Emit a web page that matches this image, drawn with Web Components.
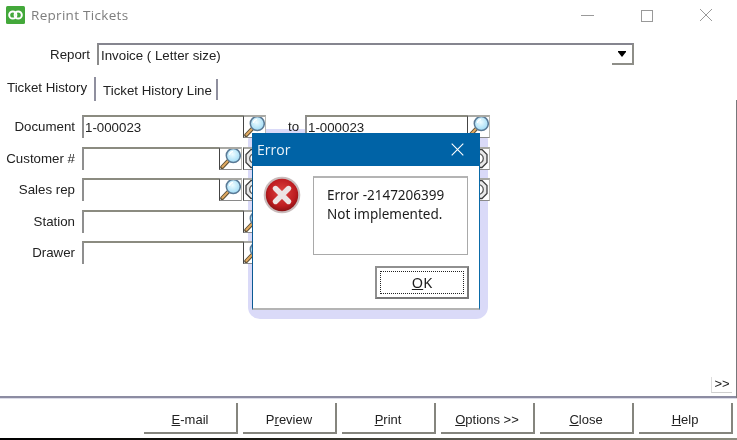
<!DOCTYPE html>
<html lang="en"><head><meta charset="utf-8"><title>Reprint Tickets</title>
<style>
html,body{margin:0;padding:0;background:#fff;overflow:hidden}
body{width:737px;height:440px;font:13.3px "Liberation Sans",Arial,sans-serif;color:#222}
</style></head><body>

<reprint-window>
  <title-bar slot="title">Reprint Tickets</title-bar>
  <form-row slot="report" label="Report" report>
    <report-select>Invoice ( Letter size)</report-select>
  </form-row>
  <tab-strip slot="tabs"><tab-item active>Ticket History</tab-item><tab-item>Ticket History Line</tab-item></tab-strip>

  <form-row slot="rows" label="Document">
    <lookup-field width="161" value="1-000023"></lookup-field><lookup-button></lookup-button>
    <range-to>to</range-to>
    <lookup-field width="162" value="1-000023"></lookup-field><lookup-button></lookup-button>
  </form-row>
  <form-row slot="rows" label="Customer #">
    <lookup-field width="137"></lookup-field><lookup-button></lookup-button><lookup-button kind="gear" style="margin-left:1px"></lookup-button>
    <range-to></range-to>
    <lookup-field width="162"></lookup-field><lookup-button kind="gear"></lookup-button>
  </form-row>
  <form-row slot="rows" label="Sales rep">
    <lookup-field width="137"></lookup-field><lookup-button></lookup-button><lookup-button kind="gear" style="margin-left:1px"></lookup-button>
    <range-to></range-to>
    <lookup-field width="162"></lookup-field><lookup-button kind="gear"></lookup-button>
  </form-row>
  <form-row slot="rows" label="Station"><lookup-field width="161"></lookup-field><lookup-button></lookup-button></form-row>
  <form-row slot="rows" label="Drawer"><lookup-field width="161"></lookup-field><lookup-button></lookup-button></form-row>

  <more-button slot="more">&gt;&gt;</more-button>

  <action-button slot="actions"><u>E</u>-mail</action-button>
  <action-button slot="actions">P<u>r</u>eview</action-button>
  <action-button slot="actions"><u>P</u>rint</action-button>
  <action-button slot="actions"><u>O</u>ptions &gt;&gt;</action-button>
  <action-button slot="actions"><u>C</u>lose</action-button>
  <action-button slot="actions"><u>H</u>elp</action-button>

  <dialog-halo slot="halo"></dialog-halo>
  <error-dialog slot="overlay" heading="Error">Error -2147206399<br>Not implemented.</error-dialog>
</reprint-window>

<script>
function def(name, css, html, init){
  customElements.define(name, class extends HTMLElement{
    constructor(){super();const r=this.attachShadow({mode:'open'});
      r.innerHTML='<style>'+css+'</style>'+(typeof html==='function'?html(this):html);}
    connectedCallback(){ if(init) init(this); }
  });
}
const lens=`<svg width="23" height="23" viewBox="0 0 23 23" aria-hidden="true">
<defs><radialGradient id="g" cx=".45" cy=".4" r=".7"><stop offset="0" stop-color="#eefcff"/><stop offset="1" stop-color="#93d6f4"/></radialGradient></defs>
<path d="M3.2 20.2 9.6 13.4" stroke="#5f5238" stroke-width="4" stroke-linecap="round"/>
<path d="M3.4 19.8 9.2 13.6" stroke="#e3ab62" stroke-width="2" stroke-linecap="round"/>
<circle cx="14.3" cy="8.6" r="7" fill="url(#g)" stroke="#5a7a96" stroke-width="1.5"/>
<path d="M10.4 8a4.4 4.4 0 0 1 3.6-3.6" stroke="#fff" stroke-width="1.3" fill="none"/></svg>`;
const gear=`<svg width="23" height="23" viewBox="0 0 23 23" aria-hidden="true">
<path d="M8 2.5h7l5 5v8l-5 5H8l-5-5v-8z" fill="#e9e9e9" stroke="#3e3e3e" stroke-width="1.3"/>
<circle cx="11.5" cy="11.5" r="4.8" fill="#fff" stroke="#555" stroke-width="1.3"/></svg>`;

def('reprint-window',`
:host{display:flex;flex-direction:column;position:relative;width:737px;height:440px;background:#fff;overflow:hidden;filter:blur(.45px)}
.body{flex:1;display:flex;flex-direction:column;min-height:0;position:relative;z-index:1}
.tabs{margin-top:12px}
.rows{display:flex;flex-direction:column;gap:8.5px;margin-top:14px}
.more{margin-top:auto;display:flex;justify-content:flex-end;padding-right:5px;margin-bottom:3px}
.foot{border-top:2px solid #8c8ca2;box-shadow:inset 0 1px 0 #dcdce8;height:42px;box-sizing:border-box;display:flex;justify-content:flex-end;gap:5px;padding:5px 4px 0 0;flex:none}
.strip{height:2px;flex:none;background:linear-gradient(90deg,#000 0,#1a1a14 35%,#55554c 60%,#8d8d80 100%)}
.edge{position:absolute;right:0;top:100px;bottom:42px;width:1px;background:#77777a}
`,`<slot name="halo"></slot><slot name="title"></slot><div class="body"><slot name="report"></slot><div class="tabs"><slot name="tabs"></slot></div>
<div class="rows"><slot name="rows"></slot></div><div class="more"><slot name="more"></slot></div></div>
<div class="foot"><slot name="actions"></slot></div><div class="strip"></div><div class="edge"></div><slot name="overlay"></slot>`);

def('dialog-halo',`:host{position:absolute;left:248px;top:129px;width:240px;height:190px;background:#dadaf8;border-radius:12px;z-index:0}`,``);

def('title-bar',`
:host{display:flex;align-items:center;height:43px;flex:none;padding:0 24px 0 6px;box-sizing:border-box;color:#7d7d7d;font:13.5px "Open Sans",sans-serif;letter-spacing:.3px}
svg{flex:none}.t{margin-left:6px;flex:1;margin-top:-13px}
.ico{margin-top:-13px}
.w{display:flex;gap:46px;align-items:center;margin-top:-13px}
`,`<svg class="ico" width="19" height="18" viewBox="0 0 19 18" aria-hidden="true"><rect width="19" height="18" rx="1.5" fill="#43a83a"/>
<circle cx="6.8" cy="9" r="3.6" fill="none" stroke="#fff" stroke-width="2"/><circle cx="12.2" cy="9" r="3.6" fill="none" stroke="#fff" stroke-width="2"/></svg>
<span class="t"><slot></slot></span>
<span class="w">
<svg width="13" height="13" viewBox="0 0 13 13" aria-hidden="true"><path d="M0 6.5h13" stroke="#9a9a9a"/></svg>
<svg width="13" height="13" viewBox="0 0 13 13" aria-hidden="true"><rect x="1.5" y="1.5" width="11" height="11" fill="none" stroke="#999"/></svg>
<svg width="14" height="14" viewBox="0 0 14 14" aria-hidden="true"><path d="M1 1l12 12M13 1 1 13" stroke="#8d8d8d" stroke-width=".9"/></svg>
</span>`);

def('form-row',`
:host{display:grid;grid-template-columns:75px 1fr;column-gap:7px;align-items:center;height:23px;flex:none}
:host([report]){grid-template-columns:90px 1fr;height:22px}
.l{text-align:right;white-space:nowrap}.c{display:flex;align-items:stretch;height:100%}
`,h=>`<div class="l">${h.getAttribute('label')}</div><div class="c"><slot></slot></div>`);

def('report-select',`
:host{display:flex;align-items:center;box-sizing:border-box;width:537px;height:22px;border-top:2px solid #85858f;border-left:2px solid #8b8b8b;border-right:2px solid #8e8e88;padding-left:2px;position:relative}
.a{position:absolute;right:0;bottom:0;width:20px;height:20px;box-sizing:border-box;border-bottom:2px solid #8e8e88;display:flex;align-items:center;justify-content:center}
.a i{display:block;width:0;height:0;border:4.5px solid transparent;border-top:5px solid #000;border-bottom:0;box-shadow:0 -1px 0 #000;margin-top:1px}
`,`<slot></slot><div class="a"><i></i></div>`);

def('tab-strip',`:host{display:flex;height:24px;align-items:flex-start}`,`<slot></slot>`);
def('tab-item',`
:host{display:flex;align-items:center;box-sizing:border-box;height:21px;margin-top:2px;padding:1px 4px 0 7px;border-right:2px solid #8f8f9e;white-space:nowrap}
:host([active]){margin-top:0;padding:0 7px 4px 7px;height:24px}
`,`<slot></slot>`);

def('lookup-field',`
:host{display:flex;align-items:center;box-sizing:border-box;height:23px;border-top:2px solid #8b8b80;border-left:2px solid #8f8f8f;padding-left:1px;background:#fff;white-space:nowrap}
`,h=>{h.style.width=h.getAttribute('width')+'px';return `<span>${h.getAttribute('value')||''}</span>`;});

def('lookup-button',`
:host{display:block;box-sizing:border-box;width:23px;height:23px;flex:none;border:1px solid #b9b9b4;border-top:2px solid #a9a9a4;border-left:1px solid #444;border-bottom-color:#8a8a8a;background:#fff;overflow:hidden}
svg{display:block;margin:-2px -1px 0}
`,h=>h.getAttribute('kind')==='gear'?gear:lens);

def('range-to',`:host{display:flex;align-items:center;justify-content:center;width:39px;flex:none;padding-left:16px;box-sizing:border-box}`,`<slot></slot>`);

def('more-button',`
:host{display:flex;align-items:center;justify-content:center;box-sizing:border-box;width:21px;height:16px;border-left:1px solid #dcdcdc;border-bottom:1px solid #cfcfcf;font-size:13px;line-height:13px;padding-bottom:2px}
`,`<slot></slot>`);

def('action-button',`
:host{display:flex;align-items:center;justify-content:center;box-sizing:border-box;width:94px;height:31px;border-right:2px solid #85857e;border-bottom:2px solid #85857e;font-size:13px;white-space:nowrap;padding-top:4px}
`,`<slot></slot>`);

def('error-dialog',`
:host{position:absolute;left:252px;top:133px;width:228px;height:177px;z-index:2;font:13.5px "Noto Sans",sans-serif;color:#1c1c1c;display:flex;flex-direction:column;background:#fff;box-sizing:border-box;border-left:1px solid #0a5a94;border-right:1px solid #0a6aa8;border-bottom:2px solid #b4b4b4}
.h{height:33px;flex:none;background:#0063a6;color:#e8f2f8;display:flex;align-items:center;justify-content:space-between;padding:0 16px 0 5px;font:14px "Open Sans",sans-serif;margin:0 -1px}
.m{display:flex;align-items:flex-start;padding:10px 11px 0 10px}
.b{margin-left:12px;width:155px;height:79px;box-sizing:border-box;border:1px solid #a9a9a9;border-top:2px solid #b4b4b4;padding:8px 0 0 13px;line-height:19px;white-space:nowrap}
.k{align-self:flex-end;margin:11px 10px 0 0;box-sizing:border-box;width:94px;height:33px;border:2px solid #909090;border-right-color:#777;border-bottom-color:#777;padding:3px;font-size:14.5px}
.k div{box-sizing:border-box;height:100%;border:1px dotted #222;display:flex;align-items:center;justify-content:center}
.k span{margin-top:-1px}
`,h=>`<div class="h"><span>${h.getAttribute('heading')}</span>
<svg width="13" height="13" viewBox="0 0 13 13" aria-hidden="true"><path d="M.7.7l11.6 11.6M12.3.7.7 12.3" stroke="#fff" stroke-width="1.1"/></svg></div>
<div class="m"><svg width="38" height="38" viewBox="0 0 38 38" style="flex:none;margin-top:-.5px" aria-hidden="true">
<defs><radialGradient id="r" cx=".5" cy=".42" r=".6"><stop offset="0" stop-color="#df4440"/><stop offset=".7" stop-color="#bd1c20"/><stop offset="1" stop-color="#861013"/></radialGradient></defs>
<circle cx="19" cy="19" r="18.3" fill="#c9bcbc"/><circle cx="19" cy="19" r="16.2" fill="url(#r)"/>
<path d="M12.5 12.5l13 13M25.5 12.5l-13 13" stroke="#ece4e4" stroke-width="5.4" stroke-linecap="round"/></svg>
<div class="b"><slot></slot></div></div>
<div class="k"><div><span><u>O</u>K</span></div></div>`);
</script>
</body></html>
